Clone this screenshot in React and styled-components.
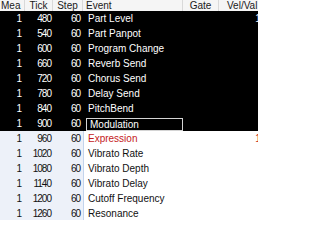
import styled, { createGlobalStyle } from "styled-components";

const GlobalStyle = createGlobalStyle`
  html, body {
    margin: 0;
    padding: 0;
    background: #ffffff;
  }
  body {
    font-family: "Liberation Sans", Arial, sans-serif;
  }
`;

const COLS = "25px 28px 30px 100px 36px 53px";

const Sheet = styled.div`
  width: 258px;
  height: 220px;
  overflow: hidden;
  font-size: 10px;
  background: #ffffff;
`;

const Table = styled.div`
  width: 272px;
`;

const HeadRow = styled.div`
  display: grid;
  grid-template-columns: ${COLS};
  height: 11px;
  background: #f5f5f5;
  color: #1a1a1a;
`;

const HeadCell = styled.div`
  line-height: 11px;
  text-align: ${({ $align }) => $align || "center"};
  padding-left: ${({ $pl }) => $pl || 0}px;
  border-right: 1px solid #d9d9d9;
  white-space: nowrap;
  overflow: hidden;
`;

const Row = styled.div`
  display: grid;
  grid-template-columns: ${COLS};
  height: 15px;
  line-height: 15px;
  background: ${({ $selected }) => ($selected ? "#000000" : "#ffffff")};
  color: ${({ $selected }) => ($selected ? "#ffffff" : "#111111")};
`;

const NumCell = styled.div`
  text-align: right;
  padding-right: ${({ $pr }) => $pr}px;
  letter-spacing: -1px;
  white-space: nowrap;
  background: ${({ $selected }) => ($selected ? "transparent" : "#edf1f9")};
`;

const EventCell = styled.div`
  display: flex;
  align-items: center;
  padding-left: ${({ $editing }) => ($editing ? 2 : 4)}px;
  border-left: 1px solid
    ${({ $selected }) => ($selected ? "#000000" : "#c3d4ec")};
  color: ${({ $red }) => ($red ? "#c41a1a" : "inherit")};
  white-space: nowrap;
  overflow: hidden;
`;

const EditBox = styled.div`
  flex: 1;
  height: 11px;
  margin-top: 2px;
  line-height: 11px;
  padding-left: 3px;
  border: 1px solid #d4d4d4;
  background: #000000;
  color: #ffffff;
`;

const PlainCell = styled.div`
  white-space: nowrap;
`;

const ValCell = styled.div`
  text-align: right;
  white-space: nowrap;
  color: ${({ $red }) => ($red ? "#c41a1a" : "inherit")};
`;

const events = [
  { tick: 480, name: "Part Level", val: "100", selected: true },
  { tick: 540, name: "Part Panpot", val: "", selected: true },
  { tick: 600, name: "Program Change", val: "", selected: true },
  { tick: 660, name: "Reverb Send", val: "", selected: true },
  { tick: 720, name: "Chorus Send", val: "", selected: true },
  { tick: 780, name: "Delay Send", val: "", selected: true },
  { tick: 840, name: "PitchBend", val: "", selected: true },
  { tick: 900, name: "Modulation", val: "", selected: true, editing: true },
  { tick: 960, name: "Expression", val: "127", red: true },
  { tick: 1020, name: "Vibrato Rate", val: "" },
  { tick: 1080, name: "Vibrato Depth", val: "" },
  { tick: 1140, name: "Vibrato Delay", val: "" },
  { tick: 1200, name: "Cutoff Frequency", val: "" },
  { tick: 1260, name: "Resonance", val: "" },
];

export default function App() {
  return (
    <Sheet>
      <GlobalStyle />
      <Table>
        <HeadRow>
          <HeadCell $align="left" $pl={1}>Mea</HeadCell>
          <HeadCell>Tick</HeadCell>
          <HeadCell>Step</HeadCell>
          <HeadCell $align="left" $pl={3}>Event</HeadCell>
          <HeadCell>Gate</HeadCell>
          <HeadCell $align="left" $pl={8}>Vel/Val</HeadCell>
        </HeadRow>
        {events.map((ev) => (
          <Row key={ev.tick} $selected={ev.selected}>
            <NumCell $pr={4} $selected={ev.selected}>1</NumCell>
            <NumCell $pr={2} $selected={ev.selected}>{ev.tick}</NumCell>
            <NumCell $pr={3} $selected={ev.selected}>60</NumCell>
            <EventCell
              $selected={ev.selected}
              $red={ev.red}
              $editing={ev.editing}
            >
              {ev.editing ? <EditBox>{ev.name}</EditBox> : ev.name}
            </EventCell>
            <PlainCell />
            <ValCell $red={ev.red}>{ev.val}</ValCell>
          </Row>
        ))}
      </Table>
    </Sheet>
  );
}
